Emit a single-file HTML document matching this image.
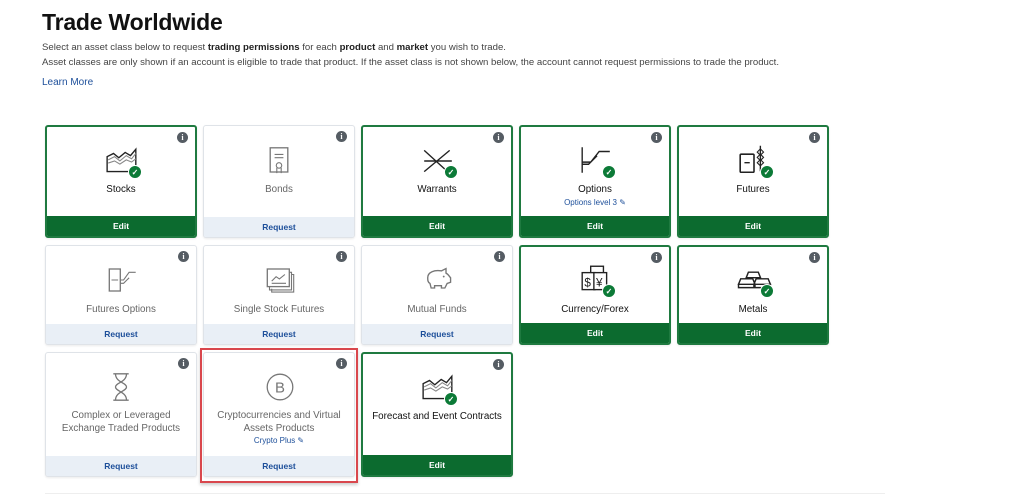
<!DOCTYPE html>
<html><head><meta charset="utf-8"><style>
*{margin:0;padding:0;box-sizing:border-box}
body{width:1011px;height:504px;background:#fff;font-family:"Liberation Sans",sans-serif;position:relative;overflow:hidden;color:#222}
h1{position:absolute;left:42px;top:9px;font-size:23px;font-weight:bold;color:#111;letter-spacing:-0.2px}
.p{position:absolute;left:42px;font-size:9.6px;color:#444;white-space:nowrap}
.p b{color:#222;font-weight:bold}
.lm{position:absolute;left:42px;top:77px;font-size:10px;color:#1d4f9a}
.c{position:absolute;width:152px;border:1px solid #dfe3e8;border-radius:3px;background:#fff;box-shadow:0 1px 2px rgba(0,0,0,.08);overflow:hidden}
.c.on{border:2px solid #1f7a40}
.f{position:absolute;left:0;right:0;bottom:0;height:20px;text-align:center;font-size:8.5px;font-weight:bold;line-height:20px}
.on .f{background:#0c6b2f;color:#fff}
.off .f{background:#e9eff6;color:#1d4f9a}
.i{position:absolute;right:7px;top:5px;width:11px;height:11px;border-radius:50%;background:#555c63;color:#fff;font-size:8px;font-weight:bold;text-align:center;line-height:11px;font-family:"Liberation Serif",serif}
.l{position:absolute;left:0;right:0;text-align:center;font-size:9.8px;line-height:13px}
.on .l{color:#111}
.off .l{color:#666}
.s{position:absolute;left:0;right:0;text-align:center;font-size:8px;color:#1d4f9a}
svg{position:absolute}
.chk{position:absolute;width:14px;height:14px;border-radius:50%;background:#0c7a37;border:1px solid #fff;color:#fff;font-size:8px;text-align:center;line-height:13px;font-weight:bold}
.red{position:absolute;left:200px;top:348px;width:158px;height:135px;border:2px solid #d9474d;box-shadow:0 2px 3px rgba(0,0,0,.2)}
.hr{position:absolute;left:45px;top:493px;width:840px;height:1px;background:#eee}
</style></head><body>
<h1>Trade Worldwide</h1>
<div class="p" style="top:42px">Select an asset class below to request <b>trading permissions</b> for each <b>product</b> and <b>market</b> you wish to trade.</div>
<div class="p" style="top:57px">Asset classes are only shown if an account is eligible to trade that product. If the asset class is not shown below, the account cannot request permissions to trade the product.</div>
<div class="lm">Learn More</div>

<!-- Row 1 -->
<div class="c on" style="left:45px;top:125px;height:113px"><div class="i">i</div>
<svg style="left:58px;top:18px" width="34" height="34" viewBox="0 0 32 30"><path d="M2 24V10l6-3 5 4 6-5 5 3 5-6v21H2z" fill="none" stroke="#222" stroke-width="1.3"/><path d="M3 13l6-3 5 4 6-5 5 3 4-5M3 16l6-2 5 3 6-4 5 2 4-3" stroke="#888" fill="none"/></svg>
<div class="chk" style="left:81px;top:38px">✓</div>
<div class="l" style="top:56px">Stocks</div><div class="f">Edit</div></div>

<div class="c off" style="left:203px;top:125px;height:113px"><div class="i">i</div>
<svg style="left:64px;top:20px" width="22" height="30" viewBox="0 0 20 26"><rect x="2" y="1" width="16" height="22" fill="none" stroke="#777" stroke-width="1.2"/><path d="M6 7h8M6 10h8" stroke="#777"/><circle cx="10" cy="17" r="2.5" fill="none" stroke="#777"/><path d="M8 19v5M12 19v5" stroke="#777"/></svg>
<div class="l" style="top:57px">Bonds</div><div class="f">Request</div></div>

<div class="c on" style="left:361px;top:125px;height:113px"><div class="i">i</div>
<svg style="left:58px;top:21px" width="34" height="26" viewBox="0 0 32 24"><path d="M3 2l22 20M3 22L27 2M3 12h26" stroke="#222" stroke-width="1.3" fill="none"/></svg>
<div class="chk" style="left:81px;top:38px">✓</div>
<div class="l" style="top:56px">Warrants</div><div class="f">Edit</div></div>

<div class="c on" style="left:519px;top:125px;height:113px"><div class="i">i</div>
<svg style="left:58px;top:18px" width="34" height="30" viewBox="0 0 32 28"><path d="M3 2v24M3 16h8l8-10h10M3 18h6l8-8" stroke="#222" stroke-width="1.3" fill="none"/></svg>
<div class="chk" style="left:81px;top:38px">✓</div>
<div class="l" style="top:56px">Options</div>
<div class="s" style="top:71px">Options level 3 ✎</div><div class="f">Edit</div></div>

<div class="c on" style="left:677px;top:125px;height:113px"><div class="i">i</div>
<svg style="left:58px;top:16px" width="34" height="33" viewBox="0 0 32 30"><rect x="3" y="10" width="13" height="17" rx="1" fill="none" stroke="#222" stroke-width="1.5"/><path d="M7 18h5M22 2v24" stroke="#222" stroke-width="1.3"/><path d="M22 5l-3 3 3 3 3-3zM22 10l-3 3 3 3 3-3zM22 15l-3 3 3 3 3-3z" fill="none" stroke="#222"/></svg>
<div class="chk" style="left:81px;top:38px">✓</div>
<div class="l" style="top:56px">Futures</div><div class="f">Edit</div></div>

<!-- Row 2 -->
<div class="c off" style="left:45px;top:245px;height:100px"><div class="i">i</div>
<svg style="left:60px;top:20px" width="33" height="28" viewBox="0 0 30 24"><rect x="3" y="2" width="10" height="20" fill="none" stroke="#777" stroke-width="1.2"/><path d="M5 12h6M13 12h3l5-7h6M13 15h3l5-5" stroke="#777" fill="none"/></svg>
<div class="l" style="top:57px">Futures Options</div><div class="f">Request</div></div>

<div class="c off" style="left:203px;top:245px;height:100px"><div class="i">i</div>
<svg style="left:60px;top:19px" width="33" height="30" viewBox="0 0 30 26"><rect x="3" y="3" width="20" height="16" fill="none" stroke="#777" stroke-width="1.2"/><path d="M5 19v3h20V6h-2M7 21v3h20V8h-2" stroke="#777" fill="none"/><path d="M7 14l4-4 3 2 5-4M7 16h13" stroke="#777" fill="none"/></svg>
<div class="l" style="top:57px">Single Stock Futures</div><div class="f">Request</div></div>

<div class="c off" style="left:361px;top:245px;height:100px"><div class="i">i</div>
<svg style="left:60px;top:20px" width="32" height="28" viewBox="0 0 28 24"><path d="M5 10c0-5 6-7 12-6l4-2v4c2 1 3 3 4 4v4l-3 1-2 4h-3v-2h-6v2H8l-1-4c-2-1-2-3-2-5z" fill="none" stroke="#777" stroke-width="1.2"/><circle cx="19" cy="9" r=".8" fill="#777"/></svg>
<div class="l" style="top:57px">Mutual Funds</div><div class="f">Request</div></div>

<div class="c on" style="left:519px;top:245px;height:100px"><div class="i">i</div>
<svg style="left:58px;top:17px" width="34" height="30" viewBox="0 0 32 28"><rect x="11" y="2" width="12" height="16" fill="none" stroke="#222" stroke-width="1.3"/><rect x="3" y="8" width="12" height="16" fill="#fff" stroke="#222" stroke-width="1.3"/><rect x="14" y="8" width="12" height="16" fill="#fff" stroke="#222" stroke-width="1.3"/><text x="5" y="21" font-size="11" font-family="Liberation Sans" fill="#222">$</text><text x="16" y="21" font-size="11" font-family="Liberation Sans" fill="#222">¥</text></svg>
<div class="chk" style="left:81px;top:37px">✓</div>
<div class="l" style="top:56px">Currency/Forex</div><div class="f">Edit</div></div>

<div class="c on" style="left:677px;top:245px;height:100px"><div class="i">i</div>
<svg style="left:57px;top:23px" width="38" height="22" viewBox="0 0 34 20"><path d="M11 2h9l2 5H9zM4 8h11l2 5H2zM18 8h11l2 5H16zM2 13h15v3H2zM16 13h15v3H16z" fill="none" stroke="#222" stroke-width="1.3"/></svg>
<div class="chk" style="left:81px;top:37px">✓</div>
<div class="l" style="top:56px">Metals</div><div class="f">Edit</div></div>

<!-- Row 3 -->
<div class="c off" style="left:45px;top:352px;height:125px"><div class="i">i</div>
<svg style="left:64px;top:18px" width="22" height="32" viewBox="0 0 20 28"><path d="M3 2h14M3 26h14M5 2c0 8 10 8 10 12s-10 4-10 12M15 2c0 8-10 8-10 12s10 4 10 12" fill="none" stroke="#777" stroke-width="1.2"/></svg>
<div class="l" style="top:56px">Complex or Leveraged<br>Exchange Traded Products</div><div class="f">Request</div></div>

<div class="c off" style="left:203px;top:352px;height:125px"><div class="i">i</div>
<svg style="left:60px;top:18px" width="32" height="32" viewBox="0 0 30 30"><circle cx="15" cy="15" r="12" fill="none" stroke="#777" stroke-width="1.2"/><text x="15" y="20" text-anchor="middle" font-size="14" font-family="Liberation Sans" fill="#777">B</text></svg>
<div class="l" style="top:56px">Cryptocurrencies and Virtual<br>Assets Products</div>
<div class="s" style="top:83px">Crypto Plus ✎</div><div class="f">Request</div></div>

<div class="c on" style="left:361px;top:352px;height:125px"><div class="i">i</div>
<svg style="left:58px;top:18px" width="34" height="34" viewBox="0 0 32 30"><path d="M2 24V10l6-3 5 4 6-5 5 3 5-6v21H2z" fill="none" stroke="#222" stroke-width="1.3"/><path d="M3 13l6-3 5 4 6-5 5 3 4-5M3 16l6-2 5 3 6-4 5 2 4-3" stroke="#888" fill="none"/></svg>
<div class="chk" style="left:81px;top:38px">✓</div>
<div class="l" style="top:56px">Forecast and Event Contracts</div><div class="f">Edit</div></div>

<div class="red"></div>
<div class="hr"></div>
</body></html>
